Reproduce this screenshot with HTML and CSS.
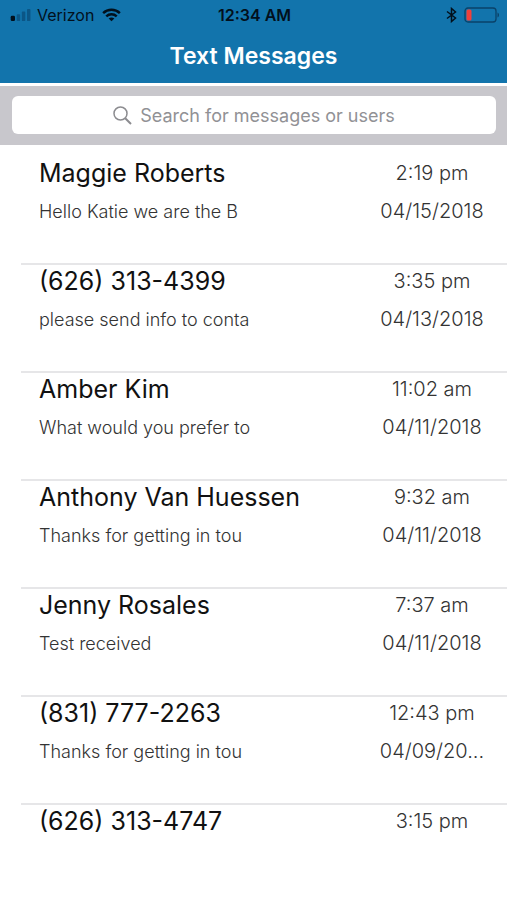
FILE: index.html
```html
<!DOCTYPE html>
<html lang="en">
<head>
<meta charset="utf-8">
<meta name="viewport" content="width=device-width, initial-scale=1">
<title>Text Messages</title>
<link rel="stylesheet" href="styles.css">
</head>
<body>
<header class="header">
  <div class="status">
    <div class="status-left">
      <svg width="24" height="12" viewBox="0 0 24 14" aria-hidden="true">
        <rect x="0" y="8" width="5" height="6" rx="1.5" fill="#02101c"/>
        <g fill="#0b5686"><rect x="7" y="6" width="4" height="8" rx="1"/><rect x="13" y="3" width="4" height="11" rx="1"/><rect x="19" y="0" width="4" height="14" rx="1"/></g>
      </svg>
      <span class="carrier">Verizon</span>
      <svg class="wifi" width="19" height="14" viewBox="0 0 20 14" fill="none" stroke="#02101c" stroke-width="2.6" aria-hidden="true">
        <path d="M1.2 5.1C6.1.4 13.9.4 18.8 5.1"/>
        <path d="M4.5 8.5c3.1-3 7.9-3 11 0"/>
        <path d="M10 13.6 7 10.8c1.700-1.500 4.300-1.500 6 0z" fill="#02101c" stroke="none"/>
      </svg>
    </div>
    <time class="clock">12:34 AM</time>
    <div class="status-right">
      <svg width="11" height="16" viewBox="0 0 11 16" fill="none" stroke="#02101c" stroke-width="1.500" aria-hidden="true"><path d="M1 4.500 9.500 11 5.500 14.500v-13L9.500 5 1 11.500"/></svg>
      <svg width="36" height="16" viewBox="0 0 36 16" aria-hidden="true">
        <rect x="1" y="1" width="31" height="14" rx="3" fill="none" stroke="#0a4269" stroke-width="1.300"/>
        <rect x="2.500" y="2.500" width="5" height="11" rx="1.500" fill="#f0403c"/>
        <path d="M33.500 5.500c2 .8 2 4.200 0 5z" fill="#0a4269"/>
      </svg>
    </div>
  </div>
  <h1 class="title">Text Messages</h1>
</header>
<div class="search-bar">
  <label class="search">
    <svg width="19" height="19" viewBox="0 0 19 19" fill="none" stroke="#8c8c90" aria-hidden="true"><circle cx="7.500" cy="7.500" r="6.500" stroke-width="1.500"/><path d="m12.200 12.200 5.800 5.800" stroke-width="2"/></svg>
    <input class="search-input" type="search" placeholder="Search for messages or users" aria-label="Search for messages or users">
  </label>
</div>
<main>
  <ul class="list">
    <li class="row"><h2 class="name">Maggie Roberts</h2><time class="when">2:19 pm</time><p class="text">Hello Katie we are the B</p><time class="when">04/15/2018</time></li>
    <li class="row"><h2 class="name">(626) 313-4399</h2><time class="when">3:35 pm</time><p class="text">please send info to conta</p><time class="when">04/13/2018</time></li>
    <li class="row"><h2 class="name">Amber Kim</h2><time class="when">11:02 am</time><p class="text">What would you prefer to</p><time class="when">04/11/2018</time></li>
    <li class="row"><h2 class="name">Anthony Van Huessen</h2><time class="when">9:32 am</time><p class="text">Thanks for getting in tou</p><time class="when">04/11/2018</time></li>
    <li class="row"><h2 class="name">Jenny Rosales</h2><time class="when">7:37 am</time><p class="text">Test received</p><time class="when">04/11/2018</time></li>
    <li class="row"><h2 class="name">(831) 777-2263</h2><time class="when">12:43 pm</time><p class="text">Thanks for getting in tou</p><time class="when">04/09/20...</time></li>
    <li class="row"><h2 class="name">(626) 313-4747</h2><time class="when">3:15 pm</time></li>
  </ul>
</main>
</body>
</html>
```
FILE: styles.css
```css
* {
  box-sizing: border-box;
}

body {
  margin: 0;
  background: #fff;
  color: #111;
  font-family: Inter, "Liberation Sans", sans-serif;
}

.header {
  background: #1274ac;
  border-bottom: 3px solid #fff;
}

.status {
  display: grid;
  grid-template-columns: 1fr auto 1fr;
  align-items: center;
  height: 30px;
  padding: 0 7px 0 9px;
  color: #02101c;
  font-size: 16px;
}

.status-left,
.status-right {
  display: flex;
  align-items: center;
  gap: 4px;
}

.status-right {
  justify-content: flex-end;
  gap: 7px;
}

.wifi {
  margin-left: 4px;
}

.clock {
  font-weight: 600;
}

.title {
  margin: 0;
  padding-bottom: 1px;
  color: #fff;
  font-size: 23px;
  font-weight: 600;
  line-height: 52px;
  text-align: center;
}

.search-bar {
  padding: 10px 11px 11px 12px;
  background: #c8c7cc;
}

.search {
  display: flex;
  align-items: center;
  justify-content: center;
  gap: 8px;
  height: 38px;
  border-radius: 6px;
  background: #fff;
}

.search-input {
  field-sizing: content;
  min-width: 0;
  padding: 0;
  border: 0;
  outline: 0;
  background: none;
  appearance: none;
  font: 400 18px Inter, "Liberation Sans", sans-serif;
}

.search-input::placeholder {
  color: #919195;
}

.list {
  margin: 0;
  padding: 10px 0 0 21px;
  list-style: none;
}

.row {
  display: grid;
  grid-template-columns: 1fr 114px;
  grid-template-rows: 32px 44px;
  align-items: center;
  height: 108px;
  padding: 0 18px;
  border-top: 2px solid #e6e6e8;
}

.row:first-child {
  border-top-color: transparent;
}

.name,
.text {
  margin: 0;
  white-space: nowrap;
}

.name {
  font-size: 25px;
  font-weight: 400;
}

.text,
.when {
  color: #333;
  font-weight: 300;
}

.text {
  font-size: 18px;
}

.when {
  font-size: 20px;
  text-align: center;
}
```
